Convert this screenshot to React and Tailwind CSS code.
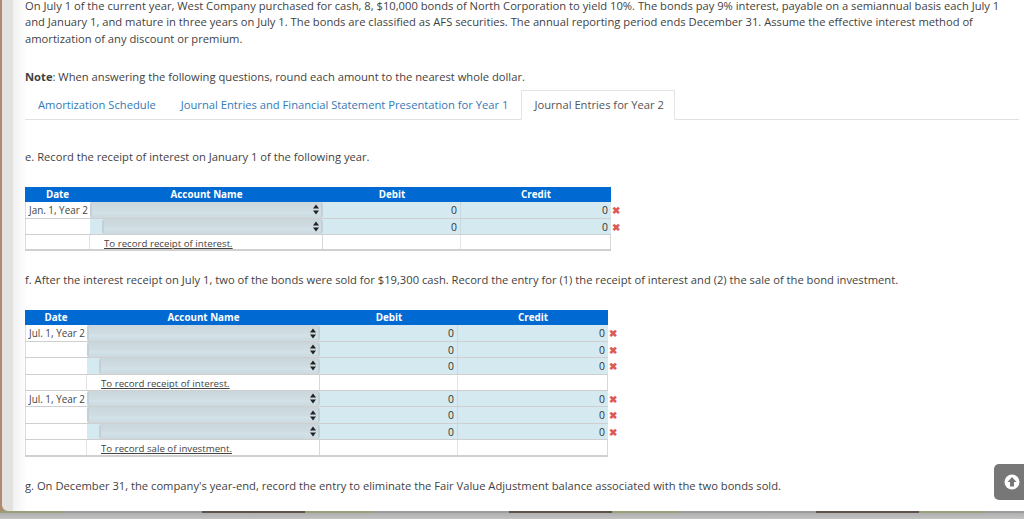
import React from 'react'

const font = { fontFamily: '"Open Sans", sans-serif' }

function SelectBox({ indent }) {
  return (
    <div className={`h-full flex items-center bg-[#d4e9f0] ${indent ? 'pl-[12px]' : 'pl-0'}`}>
      <div className="flex-1 h-full flex items-center justify-end pr-[1px] rounded-[3px] border-x-2 border-[#c3d1d7] bg-[linear-gradient(#c9d6db,#cfdce1_50%,#d2e2e8_65%,#ccd9de)]">
        <svg width="6" height="11" viewBox="0 0 6 11" className="mr-[1px]">
          <path d="M3 0.5 L6 4.5 H0 Z M3 10.5 L6 6.5 H0 Z" fill="#222" />
        </svg>
      </div>
    </div>
  )
}

function EntryRow({ date, indent, note, dateW, acctW, debitW, creditW, last }) {
  const rowCls = `flex ${last ? 'border-b-2 border-[#d0d0d0]' : 'border-b border-[#cfcfcf]'}`
  const gridStyle = 'h-full border-r border-[#e4e4e4]'
  if (note) {
    return (
      <div className={`${rowCls} h-[16.4px]`}>
        <div className={`${dateW} ${gridStyle} border-l border-l-[#dcdcdc]`} />
        <div className={`${acctW} h-full border-r border-[#d8d8d8] pl-[14px] text-[9.7px] leading-[17px] underline text-[#444] whitespace-nowrap`}>{note}</div>
        <div className={`${debitW} ${gridStyle}`} />
        <div className={`${creditW} h-full border-r border-[#d8d8d8]`} />
      </div>
    )
  }
  return (
    <div className={`${rowCls} h-[16.4px] relative`}>
      <div className={`${dateW} h-full border-l border-[#dcdcdc] pl-[3px] text-[9.9px] leading-[17px] text-[#444] whitespace-nowrap`}>{date}</div>
      <div className={`${acctW} h-full`}><SelectBox indent={indent} /></div>
      <div className={`${debitW} h-full bg-[#d4e9f0] border-r border-[#c9d9df] pr-[3px] text-right text-[10.4px] leading-[17px] text-[#333]`}>0</div>
      <div className={`${creditW} h-full bg-[#d4e9f0] pr-[3px] text-right text-[10.4px] leading-[17px] text-[#333]`}>0</div>
      <span className="absolute left-full ml-[1px] top-0 text-[10px] leading-[17px] font-bold text-[#dc5a56]">✖</span>
    </div>
  )
}

function EntryTable({ rows, dateW, acctW, debitW, creditW, width }) {
  const widths = { dateW, acctW, debitW, creditW }
  return (
    <div className={`${width} relative`}>
      <div className="flex h-[15px] bg-[#0069d2] text-white text-[9.8px] leading-[15px] font-bold text-center">
        <div className={dateW}>Date</div>
        <div className={acctW}>Account Name</div>
        <div className={debitW}>Debit</div>
        <div className={creditW}>Credit</div>
      </div>
      {rows.map((r, i) => (
        <EntryRow key={i} {...r} {...widths} last={i === rows.length - 1} />
      ))}
    </div>
  )
}

export default function App() {
  return (
    <div style={font} className="relative w-[1024px] h-[519px] overflow-hidden flex flex-col bg-[#bdbdbd] text-[#3f3f3f]">
      <div className="flex-1 flex min-h-0 bg-[#b08a70]">
        <div className="w-[2px]" />
        <div className="flex-1 flex rounded-bl-[6px] overflow-hidden">
          <div className="w-[11px] bg-[#e2e2e0]" />
          <div className="flex-1 bg-[linear-gradient(90deg,#f1f1f1,#ffffff_14px)] pl-[12px] pr-[5px]">
            <p className="text-[11.2px] leading-[12.4px] whitespace-nowrap">
              On July 1 of the current year, West Company purchased for cash, 8, $10,000 bonds of North Corporation to yield 10%. The bonds pay 9% interest, payable on a semiannual basis each July 1
            </p>
            <p className="text-[11.2px] leading-[16.4px] mt-[2px] pr-[3px]">
              and January 1, and mature in three years on July 1. The bonds are classified as AFS securities. The annual reporting period ends December 31. Assume the effective interest method of amortization of any discount or premium.
            </p>
            <p className="text-[11.2px] leading-[16px] mt-[22px]"><b>Note</b>: When answering the following questions, round each amount to the nearest whole dollar.</p>

            <div className="flex items-end h-[30px] mt-[5px] border-b border-[#e0e0e0] text-[11.2px] leading-[16px]">
              <span className="ml-[13px] mb-[6px] text-[#337ab7]">Amortization Schedule</span>
              <span className="ml-[25px] mb-[6px] text-[#337ab7]">Journal Entries and Financial Statement Presentation for Year 1</span>
              <span className="ml-[13px] -mb-px h-[30px] pl-[12px] pr-[10px] pt-[6px] bg-white border border-b-white border-[#e4e4e4] text-[#555]">Journal Entries for Year 2</span>
            </div>

            <p className="text-[11.2px] leading-[16px] mt-[29px]">e. Record the receipt of interest on January 1 of the following year.</p>

            <div className="mt-[22px]">
              <EntryTable
                width="w-[586px]"
                dateW="w-[65px]"
                acctW="w-[233px]"
                debitW="w-[138px]"
                creditW="w-[150px]"
                rows={[{ date: 'Jan. 1, Year 2' }, { indent: true }, { note: 'To record receipt of interest.' }]}
              />
            </div>

            <p className="text-[11.2px] leading-[16px] mt-[21px]">f. After the interest receipt on July 1, two of the bonds were sold for $19,300 cash. Record the entry for (1) the receipt of interest and (2) the sale of the bond investment.</p>

            <div className="mt-[22px]">
              <EntryTable
                width="w-[583px]"
                dateW="w-[62px]"
                acctW="w-[233px]"
                debitW="w-[138px]"
                creditW="w-[150px]"
                rows={[
                  { date: 'Jul. 1, Year 2' },
                  {},
                  { indent: true },
                  { note: 'To record receipt of interest.' },
                  { date: 'Jul. 1, Year 2' },
                  {},
                  { indent: true },
                  { note: 'To record sale of investment.' },
                ]}
              />
            </div>

            <p className="text-[11.2px] leading-[16px] mt-[21px]">g. On December 31, the company's year-end, record the entry to eliminate the Fair Value Adjustment balance associated with the two bonds sold.</p>
          </div>
        </div>
      </div>
      <div className="h-[8px] bg-[linear-gradient(#a9a9a9,#c2c2c2)]">
        <div className="h-[2px] bg-[repeating-linear-gradient(90deg,#98a07a_0px,#98a07a_65px,#9c9c9c_65px,#9c9c9c_202px,#5e504a_202px,#5e504a_305px,#98a07a_305px,#98a07a_307px)]" />
      </div>
      <div className="absolute right-0 top-[464px] w-[30px] h-[36px] bg-[#777] rounded-l-[5px] flex items-center justify-start pl-[10px]">
        <svg width="16" height="16" viewBox="0 0 16 16">
          <circle cx="8" cy="8" r="7.5" fill="#fff" />
          <path d="M8 3 L12.5 8 H10 V12.5 H6 V8 H3.5 Z" fill="#777" />
        </svg>
      </div>
    </div>
  )
}
